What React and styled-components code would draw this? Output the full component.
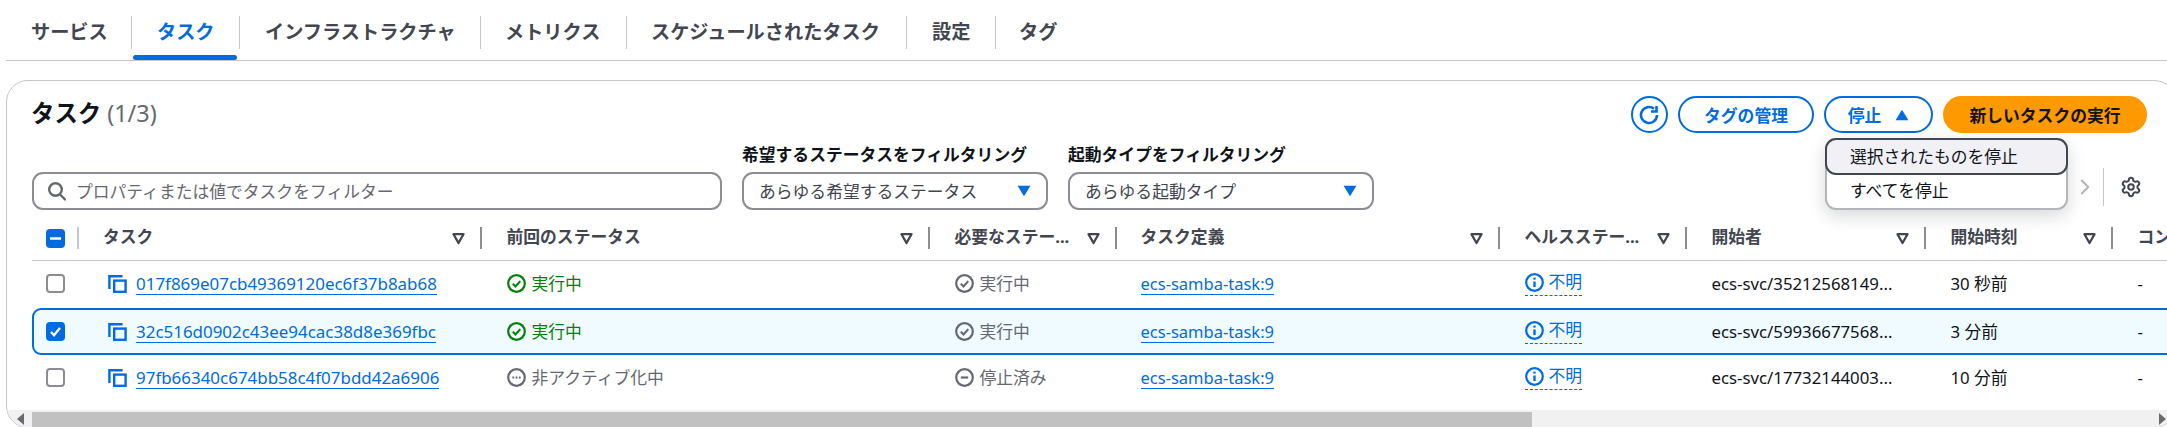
import React from 'react';
import styled, { createGlobalStyle } from 'styled-components';
import { Settings, ChevronRight } from 'lucide-react';

const Global = createGlobalStyle`
  html, body { margin: 0; padding: 0; background: #fff; overflow: hidden; height: 427px; }
  body { font-family: "Noto Sans", "Noto Sans CJK JP", sans-serif; font-size: 16.8px; color: #0f141a; }
  * { box-sizing: border-box; }
`;

const Page = styled.div`
  width: 2176px;
  padding-left: 6px;
`;

const TabBar = styled.div`
  display: flex;
  height: 61px;
  width: 2161px;
  padding-top: 16px;
  border-bottom: 1px solid #c6c6cd;
`;
const Tab = styled.div`
  display: flex;
  flex-direction: column;
  width: ${p => p.$w}px;
`;
const TabLabel = styled.div`
  height: 33px;
  padding-left: ${p => p.$pad}px;
  border-left: ${p => (p.$first ? 'none' : '1px solid #c6c6cd')};
  font-size: 19.2px;
  line-height: 32px;
  font-weight: 700;
  white-space: nowrap;
  color: ${p => (p.$active ? '#006ce0' : '#424650')};
`;
const TabLine = styled.div`
  height: 5px;
  margin: 6px 2px 0 2px;
  border-radius: 3px;
  background: ${p => (p.$active ? '#006ce0' : 'transparent')};
`;

const Card = styled.section`
  margin-top: 19px;
  height: 348px;
  border: 1px solid #c6c6cd;
  border-radius: 22px;
  overflow: hidden;
  background: #fff;
`;
const CardHead = styled.div`
  padding: 15px 28px 0 25px;
`;
const TitleRow = styled.div`
  display: flex;
  justify-content: space-between;
  align-items: flex-start;
  height: 37px;
`;
const Title = styled.h2`
  margin: 0 0 0 -1px;
  font-size: 23.4px;
  line-height: 34px;
  font-weight: 700;
  color: #0f141a;
`;
const Count = styled.span`
  font-weight: 400;
  margin-left: 6px;
  color: #656871;
`;
const Actions = styled.div`
  display: flex;
  gap: 10px;
`;
const StopWrap = styled.div`
  position: relative;
`;
const Button = styled.button`
  display: flex;
  align-items: center;
  justify-content: center;
  gap: 14px;
  height: 37px;
  width: ${p => p.$w}px;
  padding: 0;
  border: 2.4px solid ${p => (p.$primary ? '#ff9900' : '#006ce0')};
  border-radius: 19px;
  background: ${p => (p.$primary ? '#ff9900' : '#fff')};
  color: ${p => (p.$primary ? '#0f141a' : '#006ce0')};
  font: 700 16.8px "Noto Sans", "Noto Sans CJK JP", sans-serif;
`;
const Menu = styled.div`
  position: absolute;
  top: 42px;
  left: 1px;
  width: 243px;
  height: 72px;
  background: #fff;
  border: 2px solid #b4b4bb;
  border-top: none;
  border-radius: 11px;
  box-shadow: 0 6px 18px rgba(15, 20, 26, 0.16);
  z-index: 5;
`;
const MenuItem = styled.div`
  height: ${p => (p.$focus ? 37 : 34)}px;
  margin: 0 -2px;
  padding-left: ${p => (p.$focus ? 23 : 25)}px;
  line-height: ${p => (p.$focus ? 33 : 32)}px;
  font-size: 16.8px;
  color: #0f141a;
  background: ${p => (p.$focus ? '#f0f0f5' : 'transparent')};
  border: ${p => (p.$focus ? '2.4px solid #424650' : 'none')};
  border-radius: ${p => (p.$focus ? 11 : 0)}px;
`;

const FilterRow = styled.div`
  display: flex;
  align-items: flex-end;
  gap: 20px;
  margin-top: 10px;
`;
const Search = styled.div`
  display: flex;
  align-items: center;
  gap: 10px;
  width: 690px;
  height: 38px;
  padding-left: 13px;
  border: 2px solid #8c8c94;
  border-radius: 11px;
  color: #656871;
  font-size: 16.8px;
`;
const Field = styled.div`
  display: flex;
  flex-direction: column;
  gap: 5px;
  width: 306px;
`;
const FieldLabel = styled.label`
  height: 24px;
  line-height: 24px;
  font-size: 16.8px;
  font-weight: 700;
  color: #0f141a;
  white-space: nowrap;
`;
const Select = styled.div`
  display: flex;
  align-items: center;
  justify-content: space-between;
  height: 38px;
  padding: 0 15px 0 15px;
  border: 2px solid #8c8c94;
  border-radius: 11px;
  color: #424650;
  font-size: 16.8px;
`;
const Pager = styled.div`
  display: flex;
  align-items: center;
  margin-left: auto;
  height: 38px;
  margin-bottom: 4px;
  padding-right: 5.5px;
  color: #b4b4bb;
`;
const PagerDivider = styled.div`
  width: 1px;
  height: 38px;
  margin: 0 16px 0 5px;
  background: #c6c6cd;
`;

const TableWrap = styled.div`
  margin: 17px 0 0 25px;
  width: 2200px;
`;
const cols = '47px 402.5px 448px 187px 383px 187px 239px 187px 120px';
const HeadRow = styled.div`
  display: grid;
  grid-template-columns: ${cols};
  height: 34px;
  border-bottom: 1px solid #c6c6cd;
`;
const HeadCell = styled.div`
  display: flex;
  align-items: flex-start;
  height: 22px;
  padding-left: ${p => p.$pad ?? 25}px;
  font-weight: 700;
  font-size: 16.8px;
  line-height: 20px;
  color: #424650;
  white-space: nowrap;
`;
const SelectCell = styled.div`
  display: flex;
  align-items: center;
  justify-content: space-between;
  height: ${p => (p.$head ? 22 : 45)}px;
  padding-left: 14px;
`;
const HeadText = styled.span`
  flex: 1;
`;
const CaretSlot = styled.div`
  flex: none;
  margin-top: 5px;
`;
const Sep = styled.div`
  flex: none;
  width: 2px;
  height: 22px;
  margin-left: 15px;
  background: #8c8c94;
`;
const SelectSep = styled.div`
  width: 2px;
  height: 22px;
  background: #c6c6cd;
`;
const Row = styled.div`
  position: relative;
  display: grid;
  grid-template-columns: ${cols};
  height: 47px;
  padding-bottom: ${p => (p.$selected ? 0 : 2)}px;
  align-items: center;
  border-radius: 9px 0 0 9px;
  background: ${p => (p.$selected ? '#f0fbff' : 'transparent')};
  box-shadow: ${p => (p.$selected ? 'inset 0 0 0 2px #006ce0' : 'none')};
`;
const Cell = styled.div`
  display: flex;
  align-items: center;
  gap: ${p => p.$gap ?? 5}px;
  padding-left: ${p => p.$pad ?? 25}px;
  white-space: nowrap;
  font-size: 16.8px;
  line-height: 22px;
  color: #0f141a;
`;
const Box = styled.div`
  display: flex;
  align-items: center;
  justify-content: center;
  width: 19px;
  height: 19px;
  border-radius: 4px;
  border: ${p => (p.$on ? 'none' : '2.4px solid #8c8c94')};
  background: ${p => (p.$on ? '#006ce0' : '#fff')};
`;
const RowLink = styled.a`
  color: #006ce0;
  font-size: ${p => p.$size}px;
  line-height: 21px;
  border-bottom: 1.4px solid #006ce0;
`;
const Status = styled.span`
  display: inline-flex;
  align-items: center;
  gap: 6px;
  color: ${p => p.$color};
`;
const Health = styled.span`
  display: inline-flex;
  align-items: center;
  gap: 5px;
  color: #006ce0;
  border-bottom: 1.4px dashed #006ce0;
  padding-bottom: 2px;
`;
const ScrollTrack = styled.div`
  display: flex;
  align-items: flex-end;
  height: 17px;
  margin-top: 8px;
  background: #f1f1f1;
`;
const ArrowSlot = styled.div`
  display: flex;
  align-items: center;
  justify-content: center;
  flex: none;
  width: ${p => p.$w}px;
  height: 17px;
`;
const Thumb = styled.div`
  flex: none;
  width: 1500px;
  height: 15px;
  background: #c1c1c1;
`;
const Spacer = styled.div`
  flex: 1;
`;

const IconSvg = styled.svg`
  display: block;
  flex: none;
`;

const Caret = ({ up, color = '#006ce0', w = 14 }) => (
  <IconSvg width={w} height={w} viewBox="0 0 12 12">
    <polygon points={up ? '6,1.5 11.5,10.5 .5,10.5' : '.5,1.5 11.5,1.5 6,10.5'} fill={color} />
  </IconSvg>
);
const SortCaret = () => (
  <IconSvg width="13" height="13" viewBox="0 0 13 13">
    <polygon points="1.5,2.2 11.5,2.2 6.5,11" fill="none" stroke="#424650" strokeWidth="2.3" strokeLinejoin="round" />
  </IconSvg>
);
const SearchIcon = () => (
  <IconSvg width="19" height="20" viewBox="0 0 19 20" fill="none" stroke="#656871" strokeWidth="2.4">
    <circle cx="8.5" cy="8.5" r="6.3" />
    <path d="M13 13.5l5 5" strokeLinecap="round" />
  </IconSvg>
);
const RefreshIcon = () => (
  <IconSvg width="22" height="22" viewBox="0 0 22 22" fill="none" stroke="#006ce0" strokeWidth="2.6">
    <path d="M18 11a8 8 0 1 1-3-6.2" />
    <path d="M17.5 2v5.5H12" />
  </IconSvg>
);
const CopyWrap = styled.span`
  display: block;
  margin-left: 4px;
`;
const CopyIcon = () => (
  <CopyWrap>
    <IconSvg width="19" height="19" viewBox="0 0 19 19" fill="none" stroke="#006ce0" strokeWidth="2.4">
      <path d="M1.4 15V2.2h13.2" />
      <rect x="6.2" y="6.6" width="11.4" height="11.2" />
    </IconSvg>
  </CopyWrap>
);
const CircleIcon = ({ color, kind }) => (
  <IconSvg width="19" height="19" viewBox="0 0 19 19" fill="none" stroke={color} strokeWidth="2.2">
    <circle cx="9.5" cy="9.5" r="8.3" />
    {kind === 'check' && <path d="M5.8 9.8l2.7 2.7 4.8-5.4" strokeWidth="2.1" />}
    {kind === 'minus' && <path d="M5.8 9.5h7.4" />}
    {kind === 'dots' && <path d="M5.4 9.5h8.2" strokeDasharray="1.8 1.4" strokeWidth="1.8" />}
    {kind === 'info' && (
      <>
        <path d="M9.5 8.5v5.6" strokeWidth="2.4" />
        <path d="M9.5 4.6v2" strokeWidth="2.4" />
      </>
    )}
  </IconSvg>
);
const CheckMark = () => (
  <IconSvg width="13" height="13" viewBox="0 0 13 13" fill="none" stroke="#fff" strokeWidth="2.4">
    <path d="M2 7l3 3.2L11 3" />
  </IconSvg>
);
const Dash = () => (
  <IconSvg width="11" height="11" viewBox="0 0 11 11" fill="none" stroke="#fff" strokeWidth="2.4">
    <path d="M0 5.5h11" />
  </IconSvg>
);
const Triangle = ({ dir }) => (
  <IconSvg width="8" height="12" viewBox="0 0 8 12">
    <polygon points={dir === 'l' ? '8,0 8,12 1,6' : '0,0 0,12 7,6'} fill="#6b6b6b" />
  </IconSvg>
);

const tabs = [
  ['サービス', 125, 25],
  ['タスク', 108, 25],
  ['インフラストラクチャ', 241, 25],
  ['メトリクス', 146, 24],
  ['スケジュールされたタスク', 280, 24],
  ['設定', 89, 25],
  ['タグ', 120, 23],
];

const headers = [
  ['タスク', 24],
  ['前回のステータス', 25],
  ['必要なステー...', 25],
  ['タスク定義', 24],
  ['ヘルスステー...', 25],
  ['開始者', 25],
  ['開始時刻', 25],
];

const rows = [
  { id: '017f869e07cb49369120ec6f37b8ab68', last: ['実行中', '#037f0c', 'check'], want: ['実行中', 'check'], by: 'ecs-svc/35212568149...', at: '30 秒前' },
  { id: '32c516d0902c43ee94cac38d8e369fbc', selected: true, last: ['実行中', '#037f0c', 'check'], want: ['実行中', 'check'], by: 'ecs-svc/59936677568...', at: '3 分前' },
  { id: '97fb66340c674bb58c4f07bdd42a6906', last: ['非アクティブ化中', '#656871', 'dots'], want: ['停止済み', 'minus'], by: 'ecs-svc/17732144003...', at: '10 分前' },
];

export default function App() {
  return (
    <Page>
      <Global />
      <TabBar>
        {tabs.map(([t, w, pad], i) => (
          <Tab key={t} $w={w}>
            <TabLabel $first={i === 0} $active={i === 1} $pad={pad}>{t}</TabLabel>
            <TabLine $active={i === 1} />
          </Tab>
        ))}
      </TabBar>
      <Card>
        <CardHead>
          <TitleRow>
            <Title>タスク<Count>(1/3)</Count></Title>
            <Actions>
              <Button $w={37}><RefreshIcon /></Button>
              <Button $w={136}>タグの管理</Button>
              <StopWrap>
                <Button $w={109}>停止<Caret up /></Button>
                <Menu>
                  <MenuItem $focus>選択されたものを停止</MenuItem>
                  <MenuItem>すべてを停止</MenuItem>
                </Menu>
              </StopWrap>
              <Button $w={204} $primary>新しいタスクの実行</Button>
            </Actions>
          </TitleRow>
          <FilterRow>
            <Search><SearchIcon />プロパティまたは値でタスクをフィルター</Search>
            <Field>
              <FieldLabel>希望するステータスをフィルタリング</FieldLabel>
              <Select>あらゆる希望するステータス<Caret /></Select>
            </Field>
            <Field>
              <FieldLabel>起動タイプをフィルタリング</FieldLabel>
              <Select>あらゆる起動タイプ<Caret /></Select>
            </Field>
            <Pager>
              <ChevronRight size={26} strokeWidth={1.8} />
              <PagerDivider />
              <Settings size={22} strokeWidth={2.2} color="#424650" />
            </Pager>
          </FilterRow>
        </CardHead>
        <TableWrap>
          <HeadRow>
            <SelectCell $head><Box $on><Dash /></Box><SelectSep /></SelectCell>
            {headers.map(([h, pad]) => (
              <HeadCell key={h} $pad={pad}>
                <HeadText>{h}</HeadText>
                <CaretSlot><SortCaret /></CaretSlot>
                <Sep />
              </HeadCell>
            ))}
            <HeadCell><HeadText>コンテナ</HeadText></HeadCell>
          </HeadRow>
          {rows.map(r => (
            <Row key={r.id} $selected={r.selected}>
              <SelectCell><Box $on={r.selected}>{r.selected && <CheckMark />}</Box></SelectCell>
              <Cell $gap={9}><CopyIcon /><RowLink $size={16.95}>{r.id}</RowLink></Cell>
              <Cell><Status $color={r.last[1]}><CircleIcon color={r.last[1]} kind={r.last[2]} />{r.last[0]}</Status></Cell>
              <Cell><Status $color="#656871"><CircleIcon color="#656871" kind={r.want[1]} />{r.want[0]}</Status></Cell>
              <Cell $pad={24}><RowLink $size={16.5}>ecs-samba-task:9</RowLink></Cell>
              <Cell><Health><CircleIcon color="#006ce0" kind="info" />不明</Health></Cell>
              <Cell>{r.by}</Cell>
              <Cell>{r.at}</Cell>
              <Cell>-</Cell>
            </Row>
          ))}
        </TableWrap>
        <ScrollTrack>
          <ArrowSlot $w={25}><Triangle dir="l" /></ArrowSlot>
          <Thumb />
          <Spacer />
          <ArrowSlot $w={25}><Triangle dir="r" /></ArrowSlot>
        </ScrollTrack>
      </Card>
    </Page>
  );
}
